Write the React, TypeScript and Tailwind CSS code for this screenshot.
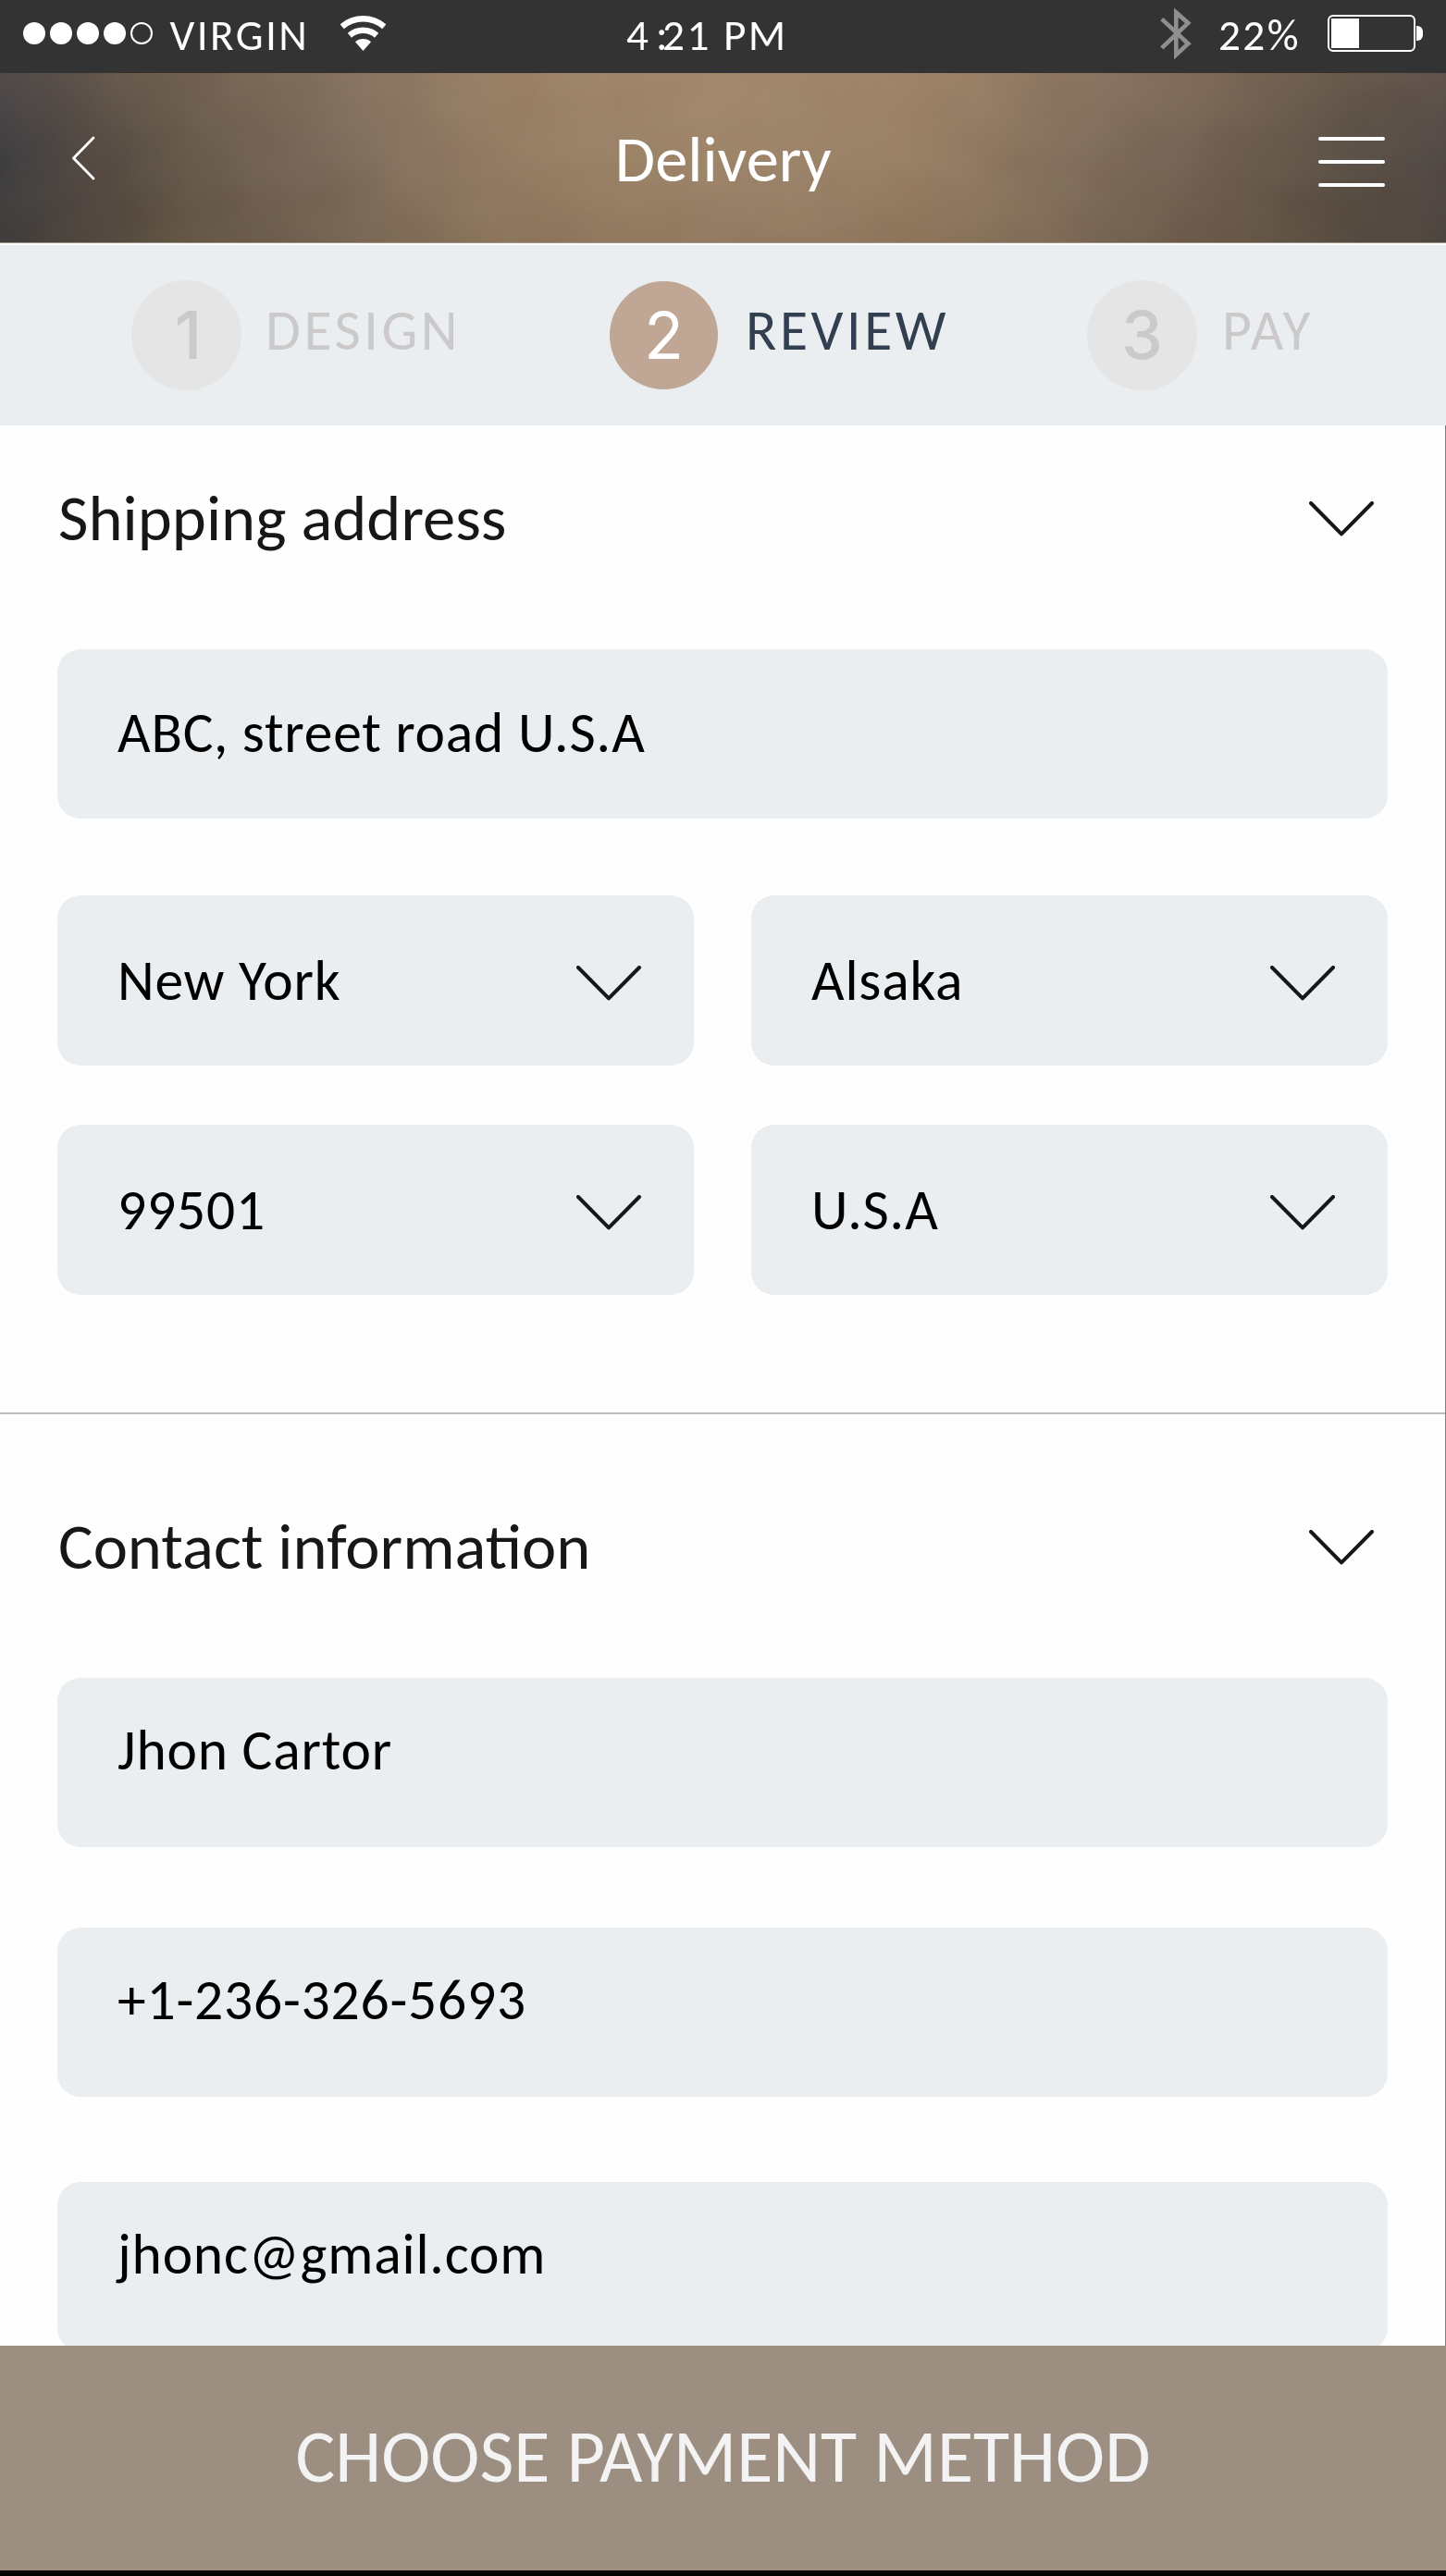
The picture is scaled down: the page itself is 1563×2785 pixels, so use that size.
import React from 'react';

function Chevron({ className = '' }: { className?: string }) {
  return (
    <svg className={className} width="70" height="38" viewBox="0 0 70 38" fill="none">
      <path d="M2 2 L35 35.4 L68 2" stroke="#171717" strokeWidth="4" strokeLinecap="round" strokeLinejoin="round" />
    </svg>
  );
}

function WifiIcon() {
  return (
    <svg width="49" height="38" viewBox="0 0 49 38" fill="none">
      <path d="M1.7 11.8 A34.75 34.75 0 0 1 47.3 11.8" stroke="#fff" strokeWidth="6.5" />
      <path d="M9.9 21.2 A22.25 22.25 0 0 1 39.1 21.2" stroke="#fff" strokeWidth="6.5" />
      <path d="M24.5 38 L16 28.2 A13 13 0 0 1 33 28.2 Z" fill="#fff" />
    </svg>
  );
}

function BluetoothIcon() {
  return (
    <svg width="34" height="57" viewBox="0 0 34 57" fill="none">
      <path
        d="M1.8 12.6 L30.3 39.2 L17.3 51.2 V5.5 L30.3 16.9 L1.8 43.8"
        stroke="#8f8f8f"
        strokeWidth="4.6"
        strokeLinejoin="miter"
      />
    </svg>
  );
}

function Battery() {
  return (
    <div className="flex items-center gap-[1.5px]">
      <div className="h-10 w-[94.5px] rounded-[6px] border-[2.5px] border-white p-[2px]">
        <div className="h-full w-[29.5px] bg-white" />
      </div>
      <div className="h-4 w-[7px] rounded-r-[6px] bg-white" />
    </div>
  );
}

function StatusBar() {
  return (
    <div className="flex h-[79px] items-center bg-[#333333] pb-[7px] pl-[24.5px] text-[47.3px] leading-none tracking-[2.4px] text-white">
      <div className="flex gap-[5px]">
        <span className="size-6 rounded-full bg-white" />
        <span className="size-6 rounded-full bg-white" />
        <span className="size-6 rounded-full bg-white" />
        <span className="size-6 rounded-full bg-white" />
        <span className="size-6 rounded-full border-[2.5px] border-white" />
      </div>
      <span className="ml-[19px] w-[184px] pt-[5px]">VIRGIN</span>
      <WifiIcon />
      <span className="ml-[260.5px] w-[577px] pt-[5px] whitespace-nowrap">
        <span className="tracking-[8px]">4</span>
        <span className="tracking-[-5.6px]">:</span>21 PM
      </span>
      <BluetoothIcon />
      <span className="ml-[29px] w-[118px] pt-[5px]">22%</span>
      <Battery />
    </div>
  );
}

function Header() {
  return (
    <header className="relative flex h-[184px] items-center justify-between overflow-hidden border-b border-[#a39584] bg-[linear-gradient(93deg,#3a393c_0px,#453f3d_60px,#50463f_105px,#594e42_160px,#655748_220px,#6f5f50_300px,#7a6857_380px,#86725c_460px,#90785e_540px,#967d62_640px,#9b8267_760px,#998066_880px,#957b60_980px,#8e765d_1060px,#836f5a_1130px,#786555_1220px,#6d5b4c_1310px,#5f5245_1400px,#544a41_1490px,#4b4240_1575px)] pr-[66px] pl-[77px]">
      <div className="absolute inset-0 bg-[linear-gradient(180deg,rgba(190,150,120,0.13),transparent_50%,rgba(60,45,20,0.12))]" />
      {/* soft leather grain */}
      <svg className="absolute inset-0 size-full opacity-15 mix-blend-soft-light">
        <filter id="grain" x="0" y="0" width="100%" height="100%">
          <feTurbulence type="fractalNoise" baseFrequency="0.012 0.017" numOctaves="2" seed="4" />
          <feColorMatrix type="saturate" values="0.2" />
          <feComponentTransfer>
            <feFuncA type="linear" slope="0" intercept="1" />
          </feComponentTransfer>
        </filter>
        <rect width="100%" height="100%" filter="url(#grain)" />
      </svg>
      <svg className="relative" width="26" height="48" viewBox="0 0 26 48" fill="none">
        <path d="M24 2 L2.5 24 L24 46" stroke="#fff" strokeWidth="2.8" strokeLinecap="round" strokeLinejoin="round" />
      </svg>
      <h1 className="relative ml-[35px] pt-[4px] text-[70.5px] leading-none text-white">Delivery</h1>
      <div className="relative mt-[9px] flex w-[71.5px] flex-col gap-[20.5px]">
        <span className="h-[4.5px] rounded-full bg-white" />
        <span className="h-[4.5px] rounded-full bg-white" />
        <span className="h-[4.5px] rounded-full bg-white" />
      </div>
    </header>
  );
}

function Steps() {
  return (
    <nav className="flex h-[197px] items-center border-t-2 border-white bg-[#eaeef0] pl-[142px] text-[61.5px] leading-none tracking-[3.6px] text-[#cbc9ca]">
      <div className="flex w-[517px] items-center">
        <span className="flex size-[119px] items-center justify-center rounded-full bg-[#e5e5e5] pl-[4px] font-[Inter] text-[71px] font-medium tracking-normal">1</span>
        <span className="ml-[26px] pb-[9px]">DESIGN</span>
      </div>
      <div className="flex w-[516px] items-center">
        <span className="flex size-[117px] items-center justify-center rounded-full bg-[#c0a694] font-[Inter] text-[70px] tracking-normal text-white">2</span>
        <span className="ml-[30px] pb-[9px] text-[#323f50]">REVIEW</span>
      </div>
      <div className="flex items-center">
        <span className="flex size-[119px] items-center justify-center rounded-full bg-[#e5e5e5] font-[Inter] text-[71px] font-medium tracking-normal">3</span>
        <span className="ml-[27px] pb-[9px]">PAY</span>
      </div>
    </nav>
  );
}

function SectionTitle({ children }: { children: React.ReactNode }) {
  return (
    <div className="flex h-[200px] items-center justify-between pr-[15px] text-[70.6px] leading-none text-[#171717]">
      <h2 className="pt-[1px] pl-[1px]">{children}</h2>
      <Chevron className="mt-[2px]" />
    </div>
  );
}

function Field({ children, className = '' }: { children: string; className?: string }) {
  return (
    <div className={`flex h-[183px] shrink-0 items-center rounded-[25px] bg-[#eaeef0] pl-[65px] text-[61.5px] leading-none tracking-[0.8px] text-black ${className}`}>
      {children}
    </div>
  );
}

function Select({ children }: { children: string }) {
  return (
    <div className="flex h-[184px] items-center justify-between rounded-[25px] bg-[#eaeef0] pr-[57px] pl-[65px] text-[61.5px] leading-none tracking-[0.8px] text-black">
      <span className="pt-[1px]">{children}</span>
      <Chevron className="mt-[5px]" />
    </div>
  );
}

export default function App() {
  return (
    <div className="flex h-[2785px] w-[1563px] flex-col overflow-hidden bg-white font-[Carlito,Calibri,Lato,sans-serif]">
      <StatusBar />
      <Header />
      <Steps />
      <main className="flex h-[2076px] flex-col overflow-hidden border-r border-[#7f7f7f] bg-[#fefefe]">
        <section className="px-[62px]">
          <SectionTitle>Shipping address</SectionTitle>
          <Field className="mt-[42px] pb-[2px]">ABC, street road U.S.A</Field>
          <div className="mt-[83px] grid grid-cols-2 gap-x-[62px] gap-y-16">
            <Select>New York</Select>
            <Select>Alsaka</Select>
            <Select>99501</Select>
            <Select>U.S.A</Select>
          </div>
        </section>
        <section className="mt-[127px] border-t-2 border-[#bdbdbd] px-[62px] pt-[43px]">
          <SectionTitle>Contact information</SectionTitle>
          <Field className="mt-[42px] pb-[26px]">Jhon Cartor</Field>
          <Field className="mt-[87px] pb-[26px]">+1-236-326-5693</Field>
          <Field className="mt-[92px] pb-[26px]">jhonc@gmail.com</Field>
        </section>
      </main>
      <button className="h-[243px] bg-[#9c8f82] pb-[2px] text-[80.2px] leading-none text-[#f3f3f3]">CHOOSE PAYMENT METHOD</button>
      <div className="h-[6px] bg-black" />
    </div>
  );
}
